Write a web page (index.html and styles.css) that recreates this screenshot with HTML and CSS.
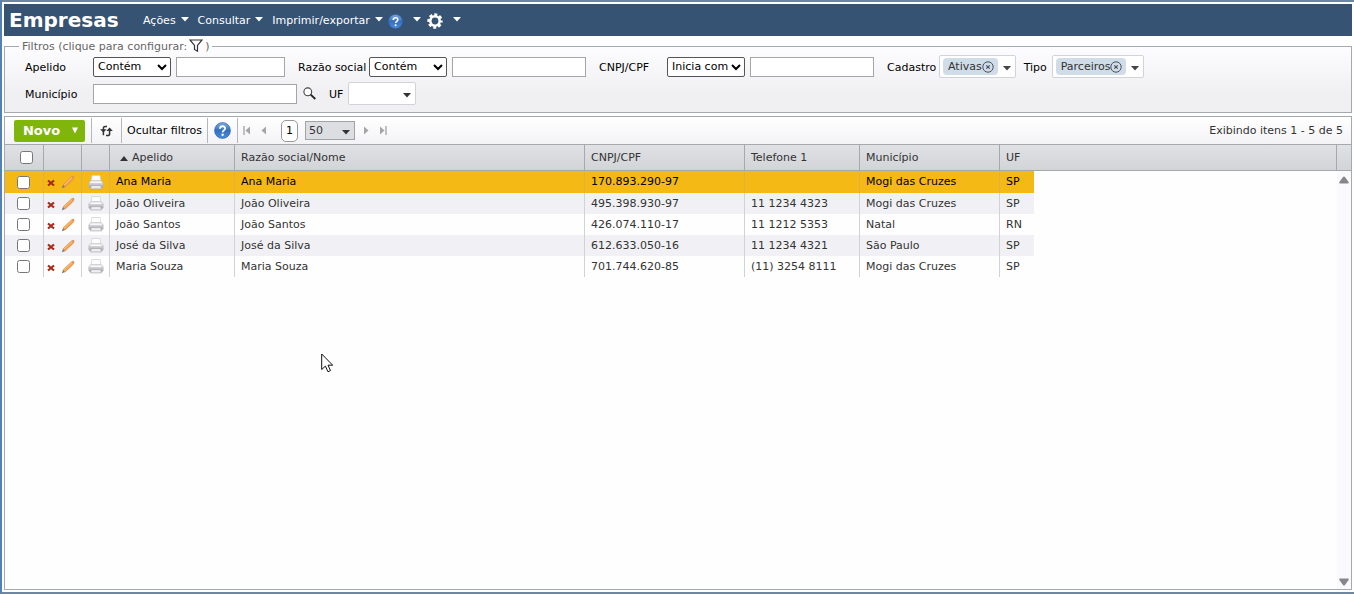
FILE: index.html
```html
<!DOCTYPE html>
<html lang="pt-BR">
<head>
<meta charset="utf-8">
<title>Empresas</title>
<link rel="stylesheet" href="styles.css">
</head>
<body>
<svg class="defs" aria-hidden="true">
  <defs>
    <linearGradient id="blue" x1="0" y1="0" x2="0" y2="1"><stop offset="0" stop-color="#7fabe0"/><stop offset="0.5" stop-color="#3570c0"/><stop offset="1" stop-color="#4a8cd8"/></linearGradient>
    <linearGradient id="metal" x1="0" y1="0" x2="0" y2="1"><stop offset="0" stop-color="#f0f0f3"/><stop offset="1" stop-color="#a8a8ae"/></linearGradient>
    <symbol id="help" viewBox="0 0 16 16"><circle cx="8" cy="8" r="7.5" fill="url(#blue)" stroke="#2f62a8" stroke-width=".6"/><path d="M5.600 6.300c0-3.100 4.900-3 4.900-.2 0 1.800-2.400 1.800-2.400 3.600" fill="none" stroke="#fff" stroke-width="1.7"/><circle cx="8.1" cy="12" r="1.1" fill="#fff"/></symbol>
    <symbol id="caret" viewBox="0 0 8 5"><path d="M0 0h8L4 4.600z" fill="currentColor"/></symbol>
    <symbol id="close" viewBox="0 0 12 12"><circle cx="6" cy="6" r="5.2" fill="none" stroke="#4a5058"/><path d="M4.300 4.300l3.400 3.400M7.700 4.300L4.300 7.700" stroke="#4a5058" stroke-width="1.2"/></symbol>
    <symbol id="delete" viewBox="0 0 8 8"><path d="M1 1.500l6 5M7 1.500l-6 5" stroke="#a82a16" stroke-width="2.2"/></symbol>
    <symbol id="pencil" viewBox="0 0 14 14"><path d="M.8 13.200l1.300-3.500 2.200 2.200z" fill="#777"/><path d="M2.100 9.700L10.600 1.800l2.100 2.100-8.400 8z" fill="#f3a04a" stroke="#d98438" stroke-width=".5"/><path d="M3 10.200l8.400-7.800" stroke="#fbd09a" stroke-width=".8"/><path d="M10.600 1.800l.8-.8q.9-.5 1.600.2t.3 1.700l-.6 1z" fill="#e0935a"/></symbol>
    <symbol id="printer" viewBox="0 0 16 15"><path d="M4 .5h8l1 6H3z" fill="#fdfdfd" stroke="#cfcfd3" stroke-width=".7"/><path d="M3 5.500h10l2.200 2.200v3.800q0 1-1 1H1.800q-1 0-1-1V7.700z" fill="url(#metal)" stroke="#b0b0b6" stroke-width=".5"/><path d="M2.400 7.300h11.200" stroke="#fff"/><path d="M3.300 10.600h9.400l.8 3.300h-11z" fill="#f0f0f2" stroke="#98989e" stroke-width=".6"/></symbol>
  </defs>
</svg>
<div class="page">
  <header class="topbar">
    <h1 class="title">Empresas</h1>
    <nav class="menu">
      <button class="menu-item" type="button">Ações<svg class="caret"><use href="#caret"/></svg></button>
      <button class="menu-item" type="button">Consultar<svg class="caret"><use href="#caret"/></svg></button>
      <button class="menu-item" type="button">Imprimir/exportar<svg class="caret"><use href="#caret"/></svg></button>
      <button class="menu-item menu-icon" type="button" aria-label="Ajuda"><svg class="icon-help-small"><use href="#help"/></svg><svg class="caret"><use href="#caret"/></svg></button>
      <button class="menu-item menu-icon" type="button" aria-label="Configurações"><svg class="icon-gear" viewBox="0 0 16 16"><circle cx="8" cy="8" r="6.300" fill="none" stroke="#fff" stroke-width="2.800" stroke-dasharray="2.900 2.048" stroke-dashoffset="1.450"/><circle cx="8" cy="8" r="4.700" fill="none" stroke="#fff" stroke-width="2.600"/></svg><svg class="caret"><use href="#caret"/></svg></button>
    </nav>
  </header>

  <fieldset class="filters">
    <legend class="legend">Filtros (clique para configurar: <svg class="icon-funnel" viewBox="0 0 14 13"><path d="M1 1h12L8.500 6.400v5.800l-3-1.800v-4z" fill="none" stroke="#333" stroke-width="1.2"/></svg>)</legend>
    <div class="filter-row">
      <div class="field">
        <label class="label label-wide" for="apelido">Apelido</label>
        <select class="operator" aria-label="Operador do apelido"><option>Contém</option></select>
        <input class="text w-109" id="apelido" type="text">
      </div>
      <div class="field">
        <label class="label label-razao" for="razao">Razão social</label>
        <select class="operator" aria-label="Operador da razão social"><option>Contém</option></select>
        <input class="text w-134" id="razao" type="text">
      </div>
      <div class="field">
        <label class="label label-wide" for="cnpj">CNPJ/CPF</label>
        <select class="operator" aria-label="Operador do CNPJ/CPF"><option>Inicia com</option></select>
        <input class="text w-124" id="cnpj" type="text">
      </div>
      <div class="field field-tags">
        <span class="label label-cadastro" id="cadastro">Cadastro</span>
        <div class="tags" role="group" aria-labelledby="cadastro"><span class="chip">Ativas<button class="plain" type="button" aria-label="Remover Ativas"><svg class="icon-close"><use href="#close"/></svg></button></span><button class="plain opener" type="button" aria-label="Abrir cadastro"><svg class="caret"><use href="#caret"/></svg></button></div>
      </div>
      <div class="field field-tags">
        <span class="label label-tipo" id="tipo">Tipo</span>
        <div class="tags" role="group" aria-labelledby="tipo"><span class="chip">Parceiros<button class="plain" type="button" aria-label="Remover Parceiros"><svg class="icon-close"><use href="#close"/></svg></button></span><button class="plain opener" type="button" aria-label="Abrir tipo"><svg class="caret"><use href="#caret"/></svg></button></div>
      </div>
    </div>
    <div class="filter-row">
      <div class="field">
        <label class="label label-wide" for="municipio">Município</label>
        <input class="text w-204" id="municipio" type="text">
        <button class="plain search" type="button" aria-label="Pesquisar município"><svg class="icon-search" viewBox="0 0 13 13"><circle cx="4.800" cy="4.800" r="3.900" fill="#fff" stroke="#444" stroke-width="1.1"/><path d="M7.700 7.700l4.600 4.300" stroke="#222" stroke-width="1.8"/></svg></button>
      </div>
      <div class="field">
        <label class="label label-uf" for="uf">UF</label>
        <span class="combo"><select class="combo-select uf-select" id="uf"><option></option></select><svg class="caret combo-caret"><use href="#caret"/></svg></span>
      </div>
    </div>
  </fieldset>

  <main class="grid">
    <div class="toolbar">
      <div class="tool tool-new"><button class="new" type="button">Novo<svg class="new-caret" viewBox="0 0 6 7"><path d="M0 .5h6L3 6.500z" fill="#fff"/></svg></button></div>
      <div class="tool tool-refresh"><button class="plain" type="button" aria-label="Atualizar"><svg class="icon-refresh" viewBox="0 0 15 12"><path d="M8 1.400H6.200Q4.400 1.400 4.400 3.300v7M7 10.600h1.800q1.800 0 1.800-1.900v-5" fill="none" stroke="#333" stroke-width="1.5"/><path d="M1 4.300L4.400 7.500 7.600 4.300zM7.400 6h6.400l-3.200-3.600z" fill="#333"/></svg></button></div>
      <div class="tool tool-hide"><button class="plain" type="button">Ocultar filtros</button></div>
      <div class="tool tool-help"><button class="plain" type="button" aria-label="Ajuda"><svg class="icon-help"><use href="#help"/></svg></button></div>
      <div class="pager">
        <button class="plain" type="button" aria-label="Primeira página"><svg class="icon-page" viewBox="0 0 8 9"><path d="M1 0v9" stroke="#999" stroke-width="1.2"/><path d="M7 .5v8L2.500 4.500z" fill="#a5a5a8"/></svg></button>
        <button class="plain" type="button" aria-label="Página anterior"><svg class="icon-page" viewBox="0 0 8 9"><path d="M6 .5v8L1.500 4.500z" fill="#a5a5a8"/></svg></button>
        <button class="page-number" type="button">1</button>
        <span class="combo"><select class="combo-select size-select" aria-label="Itens por página"><option>50</option></select><svg class="caret combo-caret"><use href="#caret"/></svg></span>
        <button class="plain" type="button" aria-label="Próxima página"><svg class="icon-page" viewBox="0 0 8 9"><path d="M1 .5v8l4.500-4z" fill="#a5a5a8"/></svg></button>
        <button class="plain" type="button" aria-label="Última página"><svg class="icon-page" viewBox="0 0 8 9"><path d="M6 0v9" stroke="#999" stroke-width="1.2"/><path d="M0 .5v8l4.500-4z" fill="#a5a5a8"/></svg></button>
      </div>
      <span class="summary">Exibindo itens 1 - 5 de 5</span>
    </div>
    <div class="grid-body">
      <table class="table">
        <colgroup><col class="c-check"><col class="c-edit"><col class="c-print"><col class="c-apelido"><col class="c-razao"><col class="c-cnpj"><col class="c-fone"><col class="c-municipio"><col class="c-uf"><col><col class="c-scroll"></colgroup>
        <thead>
          <tr><th class="check-cell"><input class="check" type="checkbox" aria-label="Selecionar todos"></th><th></th><th></th><th class="sorted"><svg class="icon-sort" viewBox="0 0 8 5"><path d="M0 5h8L4 0z" fill="#333"/></svg>Apelido</th><th>Razão social/Nome</th><th>CNPJ/CPF</th><th>Telefone 1</th><th>Município</th><th class="open">UF</th><th></th><th class="open"></th></tr>
        </thead>
        <tbody>
          <tr class="selected"><td class="check-cell"><input class="check" type="checkbox" aria-label="Ana Maria"></td><td class="actions"><div class="action-row"><button class="plain" type="button" aria-label="Excluir"><svg class="icon-delete"><use href="#delete"/></svg></button><button class="plain" type="button" aria-label="Editar"><svg class="icon-pencil"><use href="#pencil"/></svg></button></div></td><td class="print"><button class="plain" type="button" aria-label="Imprimir"><svg class="icon-printer"><use href="#printer"/></svg></button></td><td>Ana Maria</td><td>Ana Maria</td><td>170.893.290-97</td><td></td><td>Mogi das Cruzes</td><td>SP</td></tr>
          <tr class="alt"><td class="check-cell"><input class="check" type="checkbox" aria-label="João Oliveira"></td><td class="actions"><div class="action-row"><button class="plain" type="button" aria-label="Excluir"><svg class="icon-delete"><use href="#delete"/></svg></button><button class="plain" type="button" aria-label="Editar"><svg class="icon-pencil"><use href="#pencil"/></svg></button></div></td><td class="print"><button class="plain" type="button" aria-label="Imprimir"><svg class="icon-printer"><use href="#printer"/></svg></button></td><td>João Oliveira</td><td>João Oliveira</td><td>495.398.930-97</td><td>11 1234 4323</td><td>Mogi das Cruzes</td><td>SP</td></tr>
          <tr><td class="check-cell"><input class="check" type="checkbox" aria-label="João Santos"></td><td class="actions"><div class="action-row"><button class="plain" type="button" aria-label="Excluir"><svg class="icon-delete"><use href="#delete"/></svg></button><button class="plain" type="button" aria-label="Editar"><svg class="icon-pencil"><use href="#pencil"/></svg></button></div></td><td class="print"><button class="plain" type="button" aria-label="Imprimir"><svg class="icon-printer"><use href="#printer"/></svg></button></td><td>João Santos</td><td>João Santos</td><td>426.074.110-17</td><td>11 1212 5353</td><td>Natal</td><td>RN</td></tr>
          <tr class="alt"><td class="check-cell"><input class="check" type="checkbox" aria-label="José da Silva"></td><td class="actions"><div class="action-row"><button class="plain" type="button" aria-label="Excluir"><svg class="icon-delete"><use href="#delete"/></svg></button><button class="plain" type="button" aria-label="Editar"><svg class="icon-pencil"><use href="#pencil"/></svg></button></div></td><td class="print"><button class="plain" type="button" aria-label="Imprimir"><svg class="icon-printer"><use href="#printer"/></svg></button></td><td>José da Silva</td><td>José da Silva</td><td>612.633.050-16</td><td>11 1234 4321</td><td>São Paulo</td><td>SP</td></tr>
          <tr><td class="check-cell"><input class="check" type="checkbox" aria-label="Maria Souza"></td><td class="actions"><div class="action-row"><button class="plain" type="button" aria-label="Excluir"><svg class="icon-delete"><use href="#delete"/></svg></button><button class="plain" type="button" aria-label="Editar"><svg class="icon-pencil"><use href="#pencil"/></svg></button></div></td><td class="print"><button class="plain" type="button" aria-label="Imprimir"><svg class="icon-printer"><use href="#printer"/></svg></button></td><td>Maria Souza</td><td>Maria Souza</td><td>701.744.620-85</td><td>(11) 3254 8111</td><td>Mogi das Cruzes</td><td>SP</td></tr>
        </tbody>
      </table>
      <div class="scrollbar" aria-hidden="true">
        <svg class="scroll-arrow" viewBox="0 0 10 8"><path d="M4 1q1-1 2 0l3.600 5q.6 1.500-.8 1.500H1.200Q-.2 7.500.4 6z" fill="#85878a"/></svg>
        <svg class="scroll-arrow" viewBox="0 0 10 8"><path d="M4 7q1 1 2 0l3.600-5q.6-1.500-.8-1.500H1.200Q-.2.5.4 2z" fill="#85878a"/></svg>
      </div>
    </div>
  </main>
</div>
<svg class="pointer" viewBox="0 0 13 20" aria-hidden="true"><path d="M.7 1v15.500l3.700-3.400 2.600 5.700 2.500-1.200-2.500-5.400h4.700z" fill="#fff" stroke="#111"/></svg>
</body>
</html>
```
FILE: styles.css
```css
* { box-sizing: border-box; }
body {
  margin: 0;
  background: #fefefe;
  color: #000;
  font: 11px/14px "DejaVu Sans", Verdana, sans-serif;
}
button, input, select { font: inherit; color: inherit; margin: 0; }
svg { display: block; flex: none; }
.defs { position: absolute; width: 0; height: 0; }

.page {
  display: flex;
  flex-direction: column;
  min-height: 100vh;
  padding: 2px;
  border: solid #6c87a4;
  border-width: 2px 0 2px 2px;
  border-left-color: #5580b4;
}
.plain { display: inline-flex; align-items: center; padding: 0; border: 0; background: none; }
.caret { width: 8px; height: 5px; }

/* Top bar */
.topbar { display: flex; align-items: center; height: 32px; background: #365374; color: #fff; }
.title { width: 139px; margin: 0; padding-left: 5px; font-size: 20px; line-height: 30px; }
.menu { display: flex; align-items: center; padding-top: 2px; }
.menu-item { display: flex; align-items: center; gap: 5px; margin-right: 9px; padding: 0; border: 0; background: none; white-space: nowrap; }
.menu-item .caret { margin-bottom: 4px; }
.menu-icon { gap: 10px; margin: 0 10px 0 -4px; }
.icon-help-small { width: 15px; height: 15px; }
.icon-gear { width: 16px; height: 16px; }

/* Filters */
.filters {
  display: flex;
  flex-direction: column;
  gap: 4px;
  min-width: 0;
  margin: 3px 0;
  padding: 1px 20px 7px;
  border: 1px solid #a3a9ae;
  background: linear-gradient(#fdfdff, #f0f0f3 70%);
}
.legend { display: flex; align-items: center; gap: 2px; height: 15px; margin-left: -6px; padding: 0 2px 0 3px; color: #666; }
.icon-funnel { width: 14px; height: 13px; margin-bottom: 2px; }
.filter-row { display: flex; flex-wrap: wrap; align-items: center; row-gap: 4px; }
.field { display: flex; align-items: center; height: 23px; margin-right: 13px; }
.field-tags { margin-right: 8px; }
.label { padding-top: 3px; white-space: nowrap; }
.label-wide { width: 68px; }
.label-razao { width: 71px; }
.label-cadastro { width: 52px; }
.label-tipo { width: 28px; }
.label-uf { width: 19px; }
.operator { width: 78px; height: 20px; margin-right: 5px; padding: 0; border: 1px solid #555; border-radius: 2px; background: #fff; }
.text { height: 20px; padding: 0 3px; border: 1px solid #a5a5a5; background: #fff; }
.w-109 { width: 109px; }
.w-134 { width: 134px; }
.w-124 { width: 124px; }
.w-204 { width: 204px; }
.tags { display: flex; align-items: center; height: 23px; padding: 0 4px 0 3px; border: 1px solid #d0d4da; border-radius: 2px; background: #fff; color: #333; }
.chip { display: flex; align-items: center; height: 17px; padding: 0 4px 0 5px; border-radius: 4px; background: #d0dce8; }
.icon-close { width: 12px; height: 12px; }
.opener { margin: 3px 0 0 5px; color: #444; }
.search { margin-left: 6px; }
.icon-search { width: 13px; height: 13px; }

/* Select with its own caret */
.combo { display: grid; align-items: center; color: #333; }
.combo-select { grid-area: 1 / 1; appearance: none; padding: 0 3px; border: 1px solid #d0d4da; border-radius: 2px; background: #fff; }
.combo-caret { grid-area: 1 / 1; justify-self: end; margin: 3px 5px 0 0; pointer-events: none; }
.uf-select { width: 68px; height: 23px; }
.size-select { width: 50px; height: 19px; border-color: #a0a3a8; border-radius: 0; background: #dcdee2; }

/* Grid */
.grid { display: flex; flex-direction: column; flex: 1; border: 1px solid #a3a9ae; }
.toolbar { display: flex; align-items: center; height: 28px; border-bottom: 1px solid #a3a9ae; background: linear-gradient(#fff, #f3f3f6); }
.tool { display: flex; align-items: center; justify-content: center; height: 25px; border-right: 1px solid #b4b7bb; }
.tool-new { width: 87px; padding-left: 3px; }
.tool-refresh { width: 30px; }
.tool-hide { width: 86px; }
.tool-help { width: 30px; }
.new { display: flex; align-items: center; gap: 12px; height: 22px; padding: 0 7px 0 9px; border: 0; border-radius: 2px; background: #80b60b; color: #fff; font-size: 13px; font-weight: bold; }
.new-caret { width: 6px; height: 7px; }
.icon-refresh { width: 15px; height: 12px; }
.icon-help { width: 17px; height: 17px; }
.pager { display: flex; align-items: center; gap: 7px; padding-left: 4px; }
.icon-page { width: 10px; height: 9px; }
.page-number { width: 17px; height: 22px; margin: 0 0 0 5px; padding: 0; border: 1px solid #999; border-radius: 5px; background: #fff; }
.summary { margin-left: auto; padding-right: 8px; color: #333; }
.grid-body { position: relative; flex: 1; }
.table { width: 100%; border-collapse: separate; border-spacing: 0; table-layout: fixed; color: #333; }
.c-check { width: 39px; }
.c-edit { width: 38px; }
.c-print { width: 28px; }
.c-apelido { width: 125px; }
.c-razao { width: 350px; }
.c-cnpj { width: 160px; }
.c-fone { width: 115px; }
.c-municipio { width: 140px; }
.c-uf { width: 34px; }
.c-scroll { width: 14px; }
th { height: 26px; padding: 0 6px; border-right: 1px solid #a3a9ae; border-bottom: 1px solid #a3a9ae; background: linear-gradient(#dfe1e4, #d2d4d8); font-weight: normal; text-align: left; white-space: nowrap; }
th.open { border-right: 0; }
.sorted { padding-left: 10px; }
.icon-sort { display: inline-block; width: 8px; height: 5px; margin-right: 4px; }
td { height: 21px; padding: 0 6px; border-right: 1px solid #d0d2d6; white-space: nowrap; }
td:last-child { border-right: 0; }
.alt td { background: #f1f1f5; }
.selected td { height: 22px; border-color: #dfb144; background: #f5b916; color: #000; }
.check-cell { padding: 0 0 0 12px; }
th.check-cell { padding-left: 15px; }
.check { display: block; width: 13px; height: 13px; }
.actions { padding: 0 0 0 3px; }
.action-row { display: flex; align-items: center; gap: 6px; }
.icon-delete { width: 8px; height: 8px; margin-top: 2px; }
.icon-pencil { width: 14px; height: 14px; }
.print { padding: 0 0 0 6px; line-height: 0; }
.icon-printer { width: 16px; height: 15px; }
.scrollbar { position: absolute; top: 26px; right: 0; bottom: 0; display: flex; flex-direction: column; justify-content: space-between; align-items: center; width: 14px; padding: 5px 0 3px; background: #fafafc; }
.scroll-arrow { width: 10px; height: 8px; }

.pointer { position: absolute; left: 321px; top: 353px; width: 13px; height: 20px; }
```
